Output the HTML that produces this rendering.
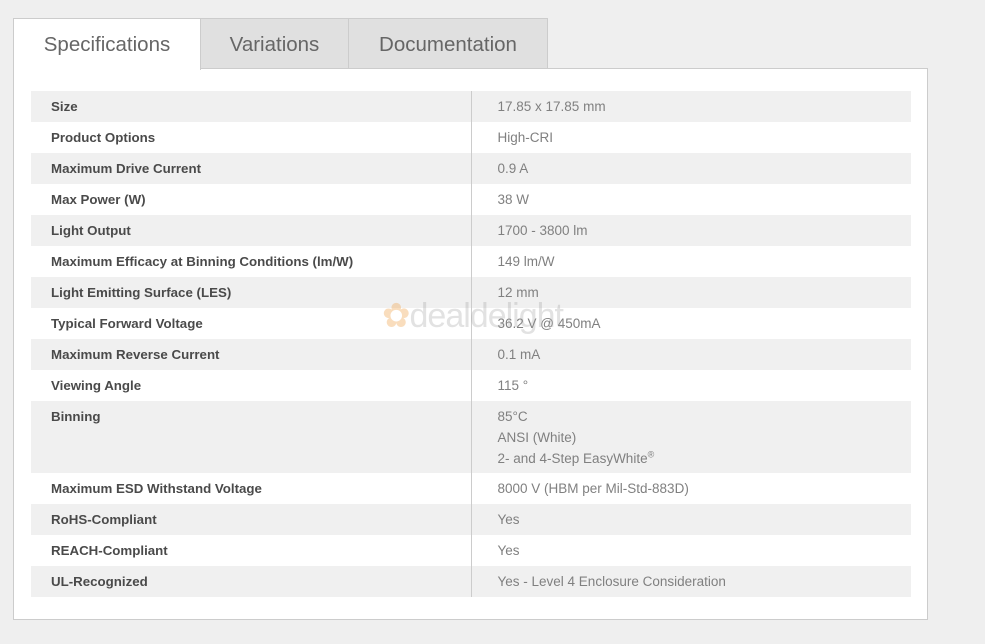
<!DOCTYPE html><html><head><style>
body{margin:0;background:#efefef;width:985px;height:644px;position:relative;font-family:"Liberation Sans",sans-serif;overflow:hidden}
.tab{position:absolute;top:18px;height:50px;line-height:52px;text-align:center;font-size:20.5px;color:#666;background:#e0e0e0;border:1px solid #ccc;border-bottom:none;box-sizing:border-box}
.panel{position:absolute;left:13px;top:68px;width:915px;height:552px;background:#fff;border:1px solid #ccc;box-sizing:border-box}
table{position:absolute;left:31px;top:91px;width:880px;border-collapse:collapse}
td{height:31px;padding:0;vertical-align:top;line-height:31px}
td.l{width:440px;padding-left:20px;font-weight:bold;color:#4a4a4a;box-sizing:border-box;font-size:13.3px}
td.v{padding-left:26px;color:#808080;border-left:1px solid #ccc;font-size:13.5px}
tr.g td{background:#f0f0f0}
.wm{position:absolute;left:382px;top:296px;font-size:34px;color:rgba(160,160,160,.3);letter-spacing:-1px}
</style></head><body>
<div class="panel"></div>
<div class="tab" style="left:13px;width:188px;background:#fff;height:52px">Specifications</div>
<div class="tab" style="left:200px;width:149px">Variations</div>
<div class="tab" style="left:348px;width:200px">Documentation</div>
<table>
<tr class="g"><td class="l">Size</td><td class="v">17.85 x 17.85 mm</td></tr>
<tr><td class="l">Product Options</td><td class="v">High-CRI</td></tr>
<tr class="g"><td class="l">Maximum Drive Current</td><td class="v">0.9 A</td></tr>
<tr><td class="l">Max Power (W)</td><td class="v">38 W</td></tr>
<tr class="g"><td class="l">Light Output</td><td class="v">1700 - 3800 lm</td></tr>
<tr><td class="l">Maximum Efficacy at Binning Conditions (lm/W)</td><td class="v">149 lm/W</td></tr>
<tr class="g"><td class="l">Light Emitting Surface (LES)</td><td class="v">12 mm</td></tr>
<tr><td class="l">Typical Forward Voltage</td><td class="v">36.2 V @ 450mA</td></tr>
<tr class="g"><td class="l">Maximum Reverse Current</td><td class="v">0.1 mA</td></tr>
<tr><td class="l">Viewing Angle</td><td class="v">115 °</td></tr>
<tr class="g"><td class="l" style="height:72px">Binning</td><td class="v" style="line-height:21px;padding-top:5px">85°C<br>ANSI (White)<br>2- and 4-Step EasyWhite<sup style="font-size:9px;line-height:0">®</sup></td></tr>
<tr><td class="l">Maximum ESD Withstand Voltage</td><td class="v">8000 V (HBM per Mil-Std-883D)</td></tr>
<tr class="g"><td class="l">RoHS-Compliant</td><td class="v">Yes</td></tr>
<tr><td class="l">REACH-Compliant</td><td class="v">Yes</td></tr>
<tr class="g"><td class="l">UL-Recognized</td><td class="v">Yes - Level 4 Enclosure Consideration</td></tr>
</table>
<div class="wm"><span style="color:rgba(240,170,90,.4)">✿</span>dealdelight</div>
</body></html>
